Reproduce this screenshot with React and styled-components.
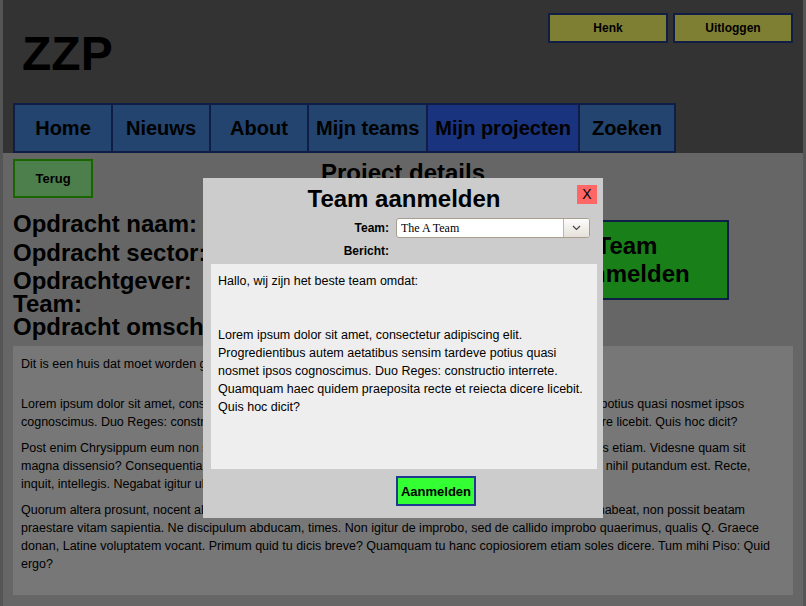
import styled, { createGlobalStyle } from 'styled-components';

const GlobalStyle = createGlobalStyle`
  html, body {
    margin: 0;
    padding: 0;
    background: #aaa;
  }
  body {
    font-family: "Liberation Sans", Arial, sans-serif;
    color: #000;
  }
`;

const Page = styled.div`
  margin: 0 3px;
  min-height: 100vh;
  background: #ccc;
  display: flex;
  flex-direction: column;
`;

const Header = styled.header`
  background: #666;
  padding: 13px 10px 0 10px;
`;

const TopRow = styled.div`
  display: flex;
  justify-content: space-between;
  align-items: flex-start;
  height: 90px;
`;

const Logo = styled.h1`
  margin: 17px 0 0 9px;
  font-size: 48px;
  line-height: 48px;
  font-weight: bold;
`;

const UserMenu = styled.div`
  display: flex;
  gap: 5px;
`;

const UserButton = styled.button`
  width: 120px;
  height: 30px;
  padding: 0;
  border: 2px solid #1f3a8f;
  background: #ff6;
  color: #000;
  font: bold 12px "Liberation Sans", Arial, sans-serif;
`;

const Nav = styled.nav`
  display: flex;
  height: 50px;
`;

const NavItem = styled.a`
  box-sizing: border-box;
  min-width: 98px;
  padding: 0 7px;
  display: flex;
  align-items: center;
  justify-content: center;
  border: 2px solid #1f3a8f;
  border-right: none;
  background: ${(p) => (p.$active ? '#3366ff' : '#4488dd')};
  color: #000;
  font-size: 20px;
  font-weight: bold;
  text-decoration: none;
  white-space: nowrap;

  &:last-child {
    border-right: 2px solid #1f3a8f;
  }
`;

const Main = styled.main`
  flex: 1;
  padding: 6px 10px 12px 10px;
`;

const TopBar = styled.div`
  display: grid;
  grid-template-columns: 80px 1fr 80px;
  align-items: start;
`;

const BackButton = styled.button`
  width: 80px;
  height: 39px;
  padding: 0;
  border: 2px solid #33cc00;
  background: #9f9;
  color: #000;
  font: bold 13px "Liberation Sans", Arial, sans-serif;
`;

const PageTitle = styled.h2`
  margin: 0;
  text-align: center;
  font-size: 24px;
  font-weight: bold;
`;

const Details = styled.div`
  display: flex;
  align-items: flex-start;
  margin-top: 14px;
`;

const InfoList = styled.div`
  flex: 1;
`;

const InfoLine = styled.div`
  font-size: 24px;
  font-weight: bold;
  line-height: 23px;
  margin-bottom: ${(p) => p.$gap || 0}px;
  white-space: nowrap;
`;

const SignupButton = styled.button`
  width: 204px;
  height: 80px;
  margin: 8px 64px 0 0;
  padding: 0 12px;
  border: 2px solid #1f3a8f;
  background: #3f3;
  color: #000;
  font: bold 24px/28px "Liberation Sans", Arial, sans-serif;
`;

const ContentBox = styled.div`
  margin-top: 8px;
  background: #eee;
  padding: 9px 8px 22px 8px;
  font-size: 12.5px;
  line-height: 18px;

  p {
    margin: 0 0 8px 0;
  }
  p:last-child {
    margin-bottom: 0;
  }
`;

const Intro = styled.div`
  margin-bottom: 22px;
`;

const Overlay = styled.div`
  position: fixed;
  inset: 0;
  background: rgba(0, 0, 0, 0.5);
  display: flex;
  justify-content: center;
  align-items: flex-start;
  padding-top: 178px;
  box-sizing: border-box;
`;

const Modal = styled.form`
  position: relative;
  width: 400px;
  box-sizing: border-box;
  padding: 7px 6px 12px 8px;
  background: #ccc;
  display: grid;
  grid-template-columns: 178px 1fr;
  column-gap: 7px;
  row-gap: 5px;
`;

const ModalTitle = styled.h2`
  grid-column: 1 / -1;
  margin: 0;
  text-align: center;
  font-size: 24px;
  line-height: 28px;
  font-weight: bold;
`;

const CloseButton = styled.button`
  position: absolute;
  top: 7px;
  right: 6px;
  width: 20px;
  height: 19px;
  padding: 0;
  border: none;
  background: #f66;
  color: #000;
  font: 14px/19px "Liberation Sans", Arial, sans-serif;
`;

const FieldLabel = styled.label`
  align-self: center;
  text-align: right;
  font-size: 12px;
  font-weight: bold;
  line-height: 16px;
`;

const SelectWrap = styled.div`
  position: relative;
  width: 194px;
  height: 20px;
`;

const Select = styled.select`
  appearance: none;
  width: 100%;
  height: 100%;
  box-sizing: border-box;
  margin: 0;
  padding: 0 28px 0 4px;
  border: 1px solid #a89f90;
  border-radius: 3px;
  background: #fff;
  color: #000;
  font: 12px "Liberation Serif", "Times New Roman", serif;
`;

const SelectArrow = styled.span`
  position: absolute;
  top: 1px;
  right: 1px;
  bottom: 1px;
  width: 25px;
  border-left: 1px solid #bdb5a6;
  border-radius: 0 2px 2px 0;
  background: linear-gradient(#fdfdfc, #e6e2da);
  display: flex;
  align-items: center;
  justify-content: center;
  pointer-events: none;
`;

const Message = styled.textarea`
  grid-column: 1 / -1;
  display: block;
  width: 100%;
  height: 205px;
  box-sizing: border-box;
  margin: 0;
  padding: 8px 7px 5px 7px;
  border: none;
  background: #eee;
  color: #000;
  font: 12.5px/18px "Liberation Sans", Arial, sans-serif;
  resize: none;
  overflow: hidden;
  outline: none;
`;

const SubmitButton = styled.button`
  grid-column: 2;
  justify-self: start;
  margin-top: 2px;
  width: 80px;
  height: 30px;
  padding: 0;
  border: 2px solid #1f3a8f;
  background: #3f3;
  color: #000;
  font: bold 13px "Liberation Sans", Arial, sans-serif;
`;

const navItems = ['Home', 'Nieuws', 'About', 'Mijn teams', 'Mijn projecten', 'Zoeken'];

const lorem =
  'Lorem ipsum dolor sit amet, consectetur adipiscing elit. Progredientibus autem aetatibus sensim tardeve potius quasi nosmet ipsos cognoscimus. Duo Reges: constructio interrete. Quamquam haec quidem praeposita recte et reiecta dicere licebit. Quis hoc dicit?';

// non-breaking spaces keep a few word pairs together so the lines break as in the original
const paragraphs = [
  lorem,
  'Post enim Chrysippum eum non sane est disputatum. Quod totum contra est. Restatis igitur, Piso, tum vos etiam. Videsne quam sit magna\u00a0dissensio? Consequentia exquirere, quoad sit id, quid volumus, effectus. Ita prorsus. Et quidem ei nihil putandum est. Recte, inquit, intellegis. Negabat igitur ullam esse artem, quae ipsa a se proficisceretur.',
  'Quorum altera prosunt, nocent altera. Quid? si etiam iucunda memoria est? Non erat. Hoc enim qui non habeat, non possit beatam praestare vitam sapientia. Ne discipulum abducam, times. Non igitur de improbo, sed de callido improbo quaerimus, qualis Q. Graece donan, Latine voluptatem vocant. Primum quid tu dicis breve? Quamquam tu hanc copiosiorem etiam soles dicere. Tum mihi Piso: Quid ergo?',
];

const message = 'Hallo, wij zijn het beste team omdat:\n\n\n' + lorem;

export default function App() {
  return (
    <>
      <GlobalStyle />
      <Page>
        <Header>
          <TopRow>
            <Logo>ZZP</Logo>
            <UserMenu>
              <UserButton>Henk</UserButton>
              <UserButton>Uitloggen</UserButton>
            </UserMenu>
          </TopRow>
          <Nav>
            {navItems.map((item) => (
              <NavItem key={item} href="#" $active={item === 'Mijn projecten'}>
                {item}
              </NavItem>
            ))}
          </Nav>
        </Header>

        <Main>
          <TopBar>
            <BackButton>Terug</BackButton>
            <PageTitle>Project details</PageTitle>
          </TopBar>

          <Details>
            <InfoList>
              <InfoLine $gap={6}>Opdracht naam:</InfoLine>
              <InfoLine $gap={5}>Opdracht sector:</InfoLine>
              <InfoLine>Opdrachtgever:</InfoLine>
              <InfoLine>Team:</InfoLine>
              <InfoLine>Opdracht omschrijving:</InfoLine>
            </InfoList>
            <SignupButton>Team aanmelden</SignupButton>
          </Details>

          <ContentBox>
            <Intro>Dit is een huis dat moet worden gebouwd.</Intro>
            {paragraphs.map((text, i) => (
              <p key={i}>{text}</p>
            ))}
          </ContentBox>
        </Main>
      </Page>

      <Overlay>
        <Modal onSubmit={(e) => e.preventDefault()}>
          <ModalTitle>Team aanmelden</ModalTitle>
          <CloseButton type="button">X</CloseButton>

          <FieldLabel htmlFor="team">Team:</FieldLabel>
          <SelectWrap>
            <Select id="team" defaultValue="a-team">
              <option value="a-team">The A Team</option>
              <option value="b-team">The B Team</option>
            </Select>
            <SelectArrow>
              <svg width="9" height="6" viewBox="0 0 9 6">
                <polyline points="1,1 4.5,4.5 8,1" fill="none" stroke="#444" strokeWidth="1.2" />
              </svg>
            </SelectArrow>
          </SelectWrap>

          <FieldLabel htmlFor="bericht">Bericht:</FieldLabel>
          <span />

          <Message id="bericht" defaultValue={message} />

          <SubmitButton type="submit">Aanmelden</SubmitButton>
        </Modal>
      </Overlay>
    </>
  );
}
